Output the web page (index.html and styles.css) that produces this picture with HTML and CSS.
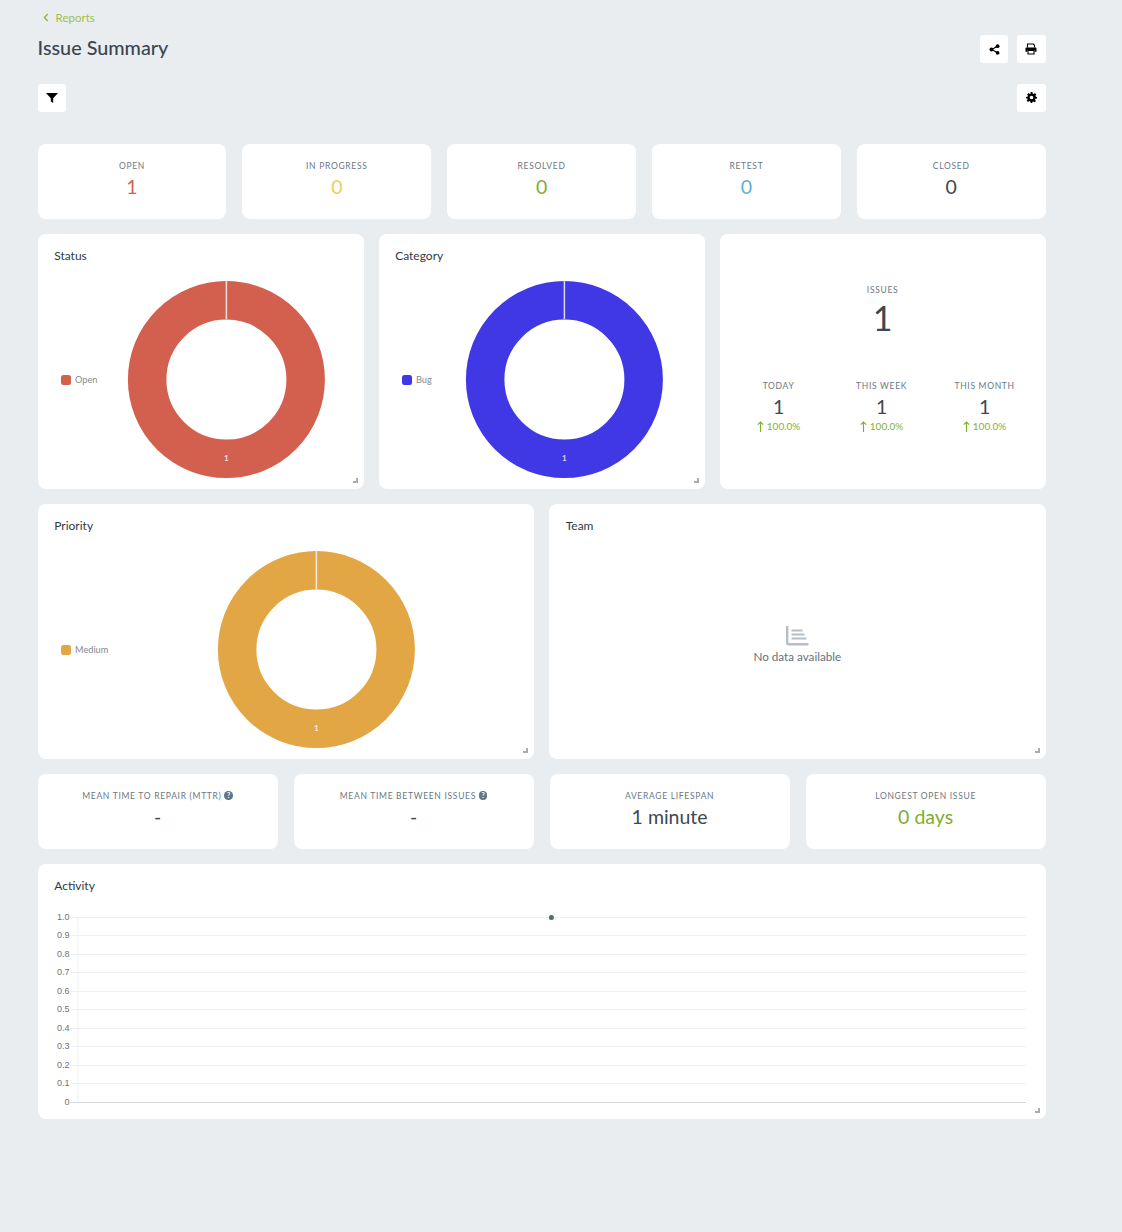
FILE: index.html
```html
<!DOCTYPE html>
<html>

<head>
    <meta charset="utf-8">
    <title>Issue Summary</title>
    <link rel="stylesheet" href="styles.css">
</head>

<body>
    <div id="pagina">
        <a class="voltar">
            <svg width="6" height="9" viewBox="0 0 6 9"><path d="M4.8 1 1.4 4.5l3.4 3.5" fill="none" stroke="#8db33a" stroke-width="1.3"/></svg>
            Reports
        </a>

        <div class="cabecalho">
            <h1 class="titulo">Issue Summary</h1>
            <div class="botoes">
                <button class="botao">
                    <svg class="icone-share" width="11" height="11" viewBox="0 0 11 11"><path d="M8.6 2.2 2.6 5.5l6 3.3" fill="none" stroke="#000" stroke-width="1.2"/><circle cx="8.6" cy="2.2" r="1.9"/><circle cx="2.4" cy="5.5" r="1.9"/><circle cx="8.6" cy="8.8" r="1.9"/></svg>
                </button>
                <button class="botao botao-largo">
                    <svg width="12" height="12" viewBox="0 0 12 12"><path d="M2.5 4.5V1h5.8l1.2 1.2v2.3" fill="none" stroke="#000" stroke-width="1.1"/><path d="M1.5 4.5h9c.6 0 1 .4 1 1v3.2H9.6V7H2.4v1.700H.5V5.500c0-.6.4-1 1-1z"/><path d="M3 7.500h6V11H3z" fill="none" stroke="#000" stroke-width="1.100"/></svg>
                </button>
            </div>
        </div>

        <div class="ferramentas">
            <button class="botao">
                <svg class="icone-filtro" width="12" height="10" viewBox="0 0 12 10"><path d="M0 0h12L7.200 5.200V10L4.800 8.400V5.200z"/></svg>
            </button>
            <button class="botao botao-largo">
                <svg class="icone-filtro" width="11" height="11" viewBox="0 0 24 24"><path fill-rule="evenodd" d="M10 0h4l.7 3.300 2.100.9 2.900-1.800 2.800 2.800-1.800 2.900.9 2.100L24 11v3l-3.400.8-.9 2.100 1.800 2.900-2.800 2.800-2.900-1.800-2.100.9L13.800 24h-3.600l-.8-3.200-2.100-.9-2.900 1.800-2.800-2.800 1.800-2.900-.9-2.100L0 14v-3l3.400-.8.900-2.100-1.800-2.900 2.800-2.800 2.900 1.800 2.100-.9zM12 8a4 4 0 1 0 0 8 4 4 0 0 0 0-8z"/></svg>
            </button>
        </div>

        <div class="linha linha-status">
            <div class="cartao cartao-numero"><span class="rotulo">OPEN</span><span class="valor vermelho">1</span></div>
            <div class="cartao cartao-numero"><span class="rotulo">IN PROGRESS</span><span class="valor amarelo">0</span></div>
            <div class="cartao cartao-numero"><span class="rotulo">RESOLVED</span><span class="valor verde">0</span></div>
            <div class="cartao cartao-numero"><span class="rotulo">RETEST</span><span class="valor azul">0</span></div>
            <div class="cartao cartao-numero"><span class="rotulo">CLOSED</span><span class="valor">0</span></div>
        </div>

        <div class="linha linha-tres">
            <div class="cartao cartao-grafico">
                <h2 class="grafico-titulo">Status</h2>
                <svg class="grafico" width="326" height="255" viewBox="0 0 326 255">
                    <rect x="23" y="141" width="10" height="10" rx="2.500" fill="#d35f4f"/>
                    <text class="legenda" x="37" y="148.800">Open</text>
                    <circle cx="188.400" cy="145.600" r="79.250" fill="none" stroke="#d35f4f" stroke-width="38.500"/>
                    <path class="corte" d="M188.400 47v38"/>
                    <text class="fatia" x="188.400" y="226.500">1</text>
                </svg>
                <span class="alca"></span>
            </div>
            <div class="cartao cartao-grafico">
                <h2 class="grafico-titulo">Category</h2>
                <svg class="grafico" width="326" height="255" viewBox="0 0 326 255">
                    <rect x="23" y="141" width="10" height="10" rx="2.500" fill="#4038e4"/>
                    <text class="legenda" x="37" y="148.800">Bug</text>
                    <circle cx="185.400" cy="145.600" r="79.250" fill="none" stroke="#4038e4" stroke-width="38.500"/>
                    <path class="corte" d="M185.400 47v38"/>
                    <text class="fatia" x="185.400" y="226.500">1</text>
                </svg>
                <span class="alca"></span>
            </div>
            <div class="cartao cartao-issues">
                <div class="issues-total">
                    <span class="rotulo">ISSUES</span>
                    <span class="valor valor-grande">1</span>
                </div>
                <div class="issues-periodos">
                    <div class="periodo">
                        <span class="rotulo">TODAY</span>
                        <span class="valor valor-medio">1</span>
                        <span class="variacao"><svg width="7" height="11" viewBox="0 0 7 11"><path d="M3.500 11V1M.8 3.600 3.500 1l2.700 2.600" fill="none" stroke="#7fae2e" stroke-width="1.100"/></svg>100.0%</span>
                    </div>
                    <div class="periodo">
                        <span class="rotulo">THIS WEEK</span>
                        <span class="valor valor-medio">1</span>
                        <span class="variacao"><svg width="7" height="11" viewBox="0 0 7 11"><path d="M3.500 11V1M.8 3.600 3.500 1l2.700 2.600" fill="none" stroke="#7fae2e" stroke-width="1.100"/></svg>100.0%</span>
                    </div>
                    <div class="periodo">
                        <span class="rotulo">THIS MONTH</span>
                        <span class="valor valor-medio">1</span>
                        <span class="variacao"><svg width="7" height="11" viewBox="0 0 7 11"><path d="M3.500 11V1M.8 3.600 3.500 1l2.700 2.600" fill="none" stroke="#7fae2e" stroke-width="1.100"/></svg>100.0%</span>
                    </div>
                </div>
            </div>
        </div>

        <div class="linha linha-duas">
            <div class="cartao cartao-grafico">
                <h2 class="grafico-titulo">Priority</h2>
                <svg class="grafico" width="496" height="255" viewBox="0 0 496 255">
                    <rect x="23" y="141" width="10" height="10" rx="2.500" fill="#e2a645"/>
                    <text class="legenda" x="37" y="148.800">Medium</text>
                    <circle cx="278.400" cy="145.600" r="79.250" fill="none" stroke="#e2a645" stroke-width="38.500"/>
                    <path class="corte" d="M278.400 47v38"/>
                    <text class="fatia" x="278.400" y="226.500">1</text>
                </svg>
                <span class="alca"></span>
            </div>
            <div class="cartao cartao-grafico cartao-vazio">
                <h2 class="grafico-titulo">Team</h2>
                <div class="vazio">
                    <svg width="23" height="20" viewBox="0 0 23 20"><path d="M1.200 0v16.500c0 1 .6 1.800 1.600 1.800H22.500" fill="none" stroke="#b4bfc8" stroke-width="2.400"/><path d="M5.500 4.500h11M5.500 8.500h13M5.500 12.500h15" fill="none" stroke="#b4bfc8" stroke-width="2"/></svg>
                    <span>No data available</span>
                </div>
                <span class="alca"></span>
            </div>
        </div>

        <div class="linha linha-quatro">
            <div class="cartao cartao-numero">
                <span class="rotulo">MEAN TIME TO REPAIR (MTTR) <span class="ajuda">?</span></span>
                <span class="valor">-</span>
            </div>
            <div class="cartao cartao-numero">
                <span class="rotulo">MEAN TIME BETWEEN ISSUES <span class="ajuda">?</span></span>
                <span class="valor">-</span>
            </div>
            <div class="cartao cartao-numero">
                <span class="rotulo">AVERAGE LIFESPAN</span>
                <span class="valor">1 minute</span>
            </div>
            <div class="cartao cartao-numero">
                <span class="rotulo">LONGEST OPEN ISSUE</span>
                <span class="valor verde">0 days</span>
            </div>
        </div>

        <div class="cartao cartao-grafico">
            <h2 class="grafico-titulo">Activity</h2>
            <svg class="grafico" id="atividade" width="1008" height="255" viewBox="0 0 1008 255"></svg>
            <span class="alca"></span>
        </div>
    </div>

    <script>
        // desenha as linhas do grafico de atividade
        var svg = document.getElementById('atividade');
        var marcas = ['1.0', '0.9', '0.8', '0.7', '0.6', '0.5', '0.4', '0.3', '0.2', '0.1', '0'];
        var conteudo = '<path d="M39.900 53v185" stroke="#eef0f2"/>';

        for (var i = 0; i < marcas.length; i++) {
            var y = Math.round(53 + i * 18.450) + 0.5;
            var cor = i == marcas.length - 1 ? '#d5d8da' : '#eef0f2';
            conteudo += '<path d="M32.500 ' + y + 'H988" stroke="' + cor + '"/>';
            conteudo += '<text class="eixo" x="31.400" y="' + (y + 2.500) + '">' + marcas[i] + '</text>';
        }

        conteudo += '<circle cx="513.400" cy="53.500" r="2.500" fill="#4f6a7a"/>';
        svg.innerHTML = conteudo;
    </script>
</body>

</html>
```

FILE: styles.css
```css
* {
    box-sizing: border-box;
    font-family: Lato, 'Noto Sans', Arial, sans-serif;
}

body {
    margin: 0;
    background-color: #e9edf0;
    color: #3a4550;
}

#pagina {
    width: 1045.600px;
    min-height: 1232px;
    padding: 10px 0 0 37.600px;
}

.voltar {
    display: flex;
    align-items: center;
    gap: 7px;
    height: 14px;
    padding-left: 5px;
    font-size: 11.500px;
    color: #9cc04f;
}

.cabecalho {
    display: flex;
    justify-content: space-between;
    align-items: center;
    margin-top: 11px;
}

.titulo {
    margin: 0 0 4px;
    font-size: 19.800px;
    font-weight: 500;
    color: #3a4550;
}

.botoes {
    display: flex;
    gap: 9px;
}

.ferramentas {
    display: flex;
    justify-content: space-between;
    margin-top: 21px;
}

.botao {
    display: flex;
    align-items: center;
    justify-content: center;
    width: 28px;
    height: 28px;
    padding: 0;
    border: 0;
    border-radius: 3px;
    background-color: #ffffff;
}

.botao-largo {
    width: 29px;
}

.icone-filtro {
    margin-bottom: 1px;
}

.icone-share {
    margin-left: 1px;
}

.linha {
    display: grid;
    margin-bottom: 15px;
}

.linha-status {
    grid-template-columns: repeat(5, 1fr);
    gap: 16px;
    margin-top: 32px;
}

.linha-tres {
    grid-template-columns: repeat(3, 1fr);
    gap: 15px;
}

.linha-duas {
    grid-template-columns: repeat(2, 1fr);
    gap: 15px;
}

.linha-quatro {
    grid-template-columns: repeat(4, 1fr);
    gap: 16px;
}

.cartao {
    position: relative;
    border-radius: 8px;
    background-color: #ffffff;
}

.cartao-numero {
    display: flex;
    flex-direction: column;
    align-items: center;
    height: 75px;
    padding-top: 17px;
}

.rotulo {
    display: block;
    font-size: 8.500px;
    line-height: 11px;
    letter-spacing: 0.700px;
    color: #6b7782;
    white-space: nowrap;
}

.valor {
    display: block;
    margin-top: 2px;
    font-size: 19.500px;
    line-height: 26px;
    color: #3d4852;
}

.vermelho {
    color: #d35f4f;
}

.amarelo {
    color: #f0cb57;
}

.verde {
    color: #7fae2e;
}

.azul {
    color: #5cb0d6;
}

.cartao-grafico {
    height: 255px;
}

.grafico-titulo {
    position: absolute;
    top: 14px;
    left: 16.600px;
    margin: 0;
    font-size: 12px;
    line-height: 16px;
    font-weight: 400;
    color: #2f3a44;
}

.grafico {
    display: block;
}

.legenda {
    font-size: 9.200px;
    fill: #85898d;
}

.corte {
    stroke: #ffffff;
    stroke-width: 1.500px;
    opacity: .8;
}

.fatia {
    font-size: 8px;
    font-weight: 700;
    fill: #ffffff;
    text-anchor: middle;
    opacity: .8;
}

.eixo {
    font-family: 'Liberation Sans', Arial, sans-serif;
    font-size: 9px;
    fill: #6e7377;
    text-anchor: end;
}

.alca {
    position: absolute;
    right: 6px;
    bottom: 6px;
    width: 5px;
    height: 5px;
    border-right: 2px solid #a9adb0;
    border-bottom: 2px solid #a9adb0;
}

.cartao-issues {
    height: 255px;
    padding-top: 51px;
}

.issues-total {
    display: flex;
    flex-direction: column;
    align-items: center;
}

.valor-grande {
    margin-top: 2px;
    font-size: 34px;
    line-height: 40px;
}

.issues-periodos {
    display: grid;
    grid-template-columns: repeat(3, 103px);
    margin-top: 43px;
    padding-left: 7.500px;
}

.periodo {
    display: flex;
    flex-direction: column;
    align-items: center;
}

.valor-medio {
    margin-top: 1px;
    line-height: 27px;
}

.variacao {
    display: flex;
    align-items: center;
    gap: 3px;
    font-size: 10px;
    line-height: 13px;
    color: #86b03a;
}

.vazio {
    display: flex;
    flex-direction: column;
    align-items: center;
    gap: 3px;
    padding-top: 122px;
    font-size: 11.700px;
    color: #66727c;
}

.ajuda {
    display: inline-block;
    width: 8.500px;
    height: 8.500px;
    border-radius: 50%;
    background-color: #5f7687;
    color: #ffffff;
    font-size: 7px;
    line-height: 9px;
    letter-spacing: 0;
    text-align: center;
    font-weight: 700;
    vertical-align: 1px;
}
```
